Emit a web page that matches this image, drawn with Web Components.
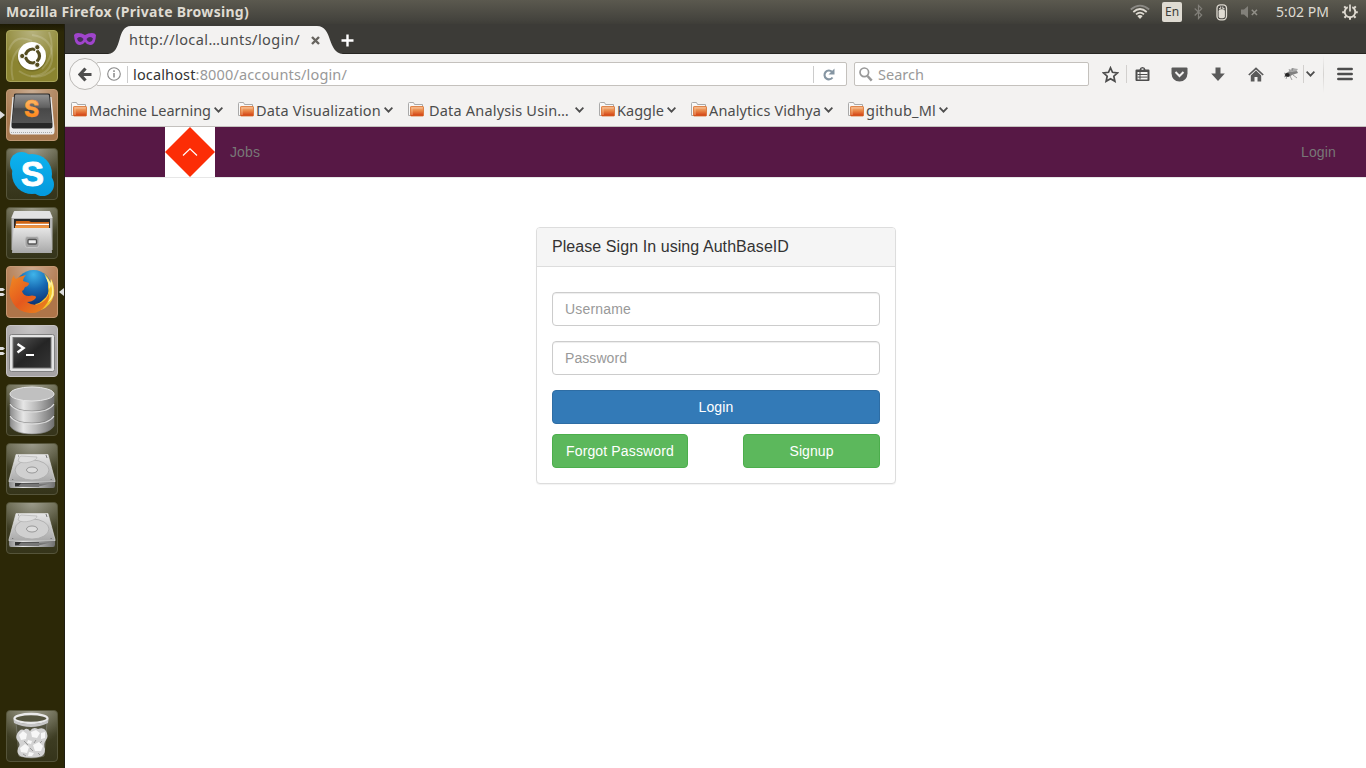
<!DOCTYPE html>
<html lang="en">
<head>
<meta charset="utf-8">
<title>Mozilla Firefox (Private Browsing)</title>
<style>
html,body{margin:0;height:100%;overflow:hidden;background:#fff}
</style>
</head>
<body>
<desktop-shell></desktop-shell>
<script>
const define = (name, html, init) => {
  const tpl = document.createElement('template');
  tpl.innerHTML = html;
  customElements.define(name, class extends HTMLElement {
    connectedCallback() {
      if (this.shadowRoot) return;
      this.attachShadow({mode: 'open'}).append(tpl.content.cloneNode(true));
      if (init) init.call(this, this.shadowRoot);
    }
  });
};

/* Glass tile behind most launcher entries */
const tile = (fill = 'url(#dk)', edge = '#55543a') => `
<defs>
<linearGradient id="dk" x1="0" y1="0" x2="0" y2="1"><stop offset="0" stop-color="#605f45"/><stop offset=".45" stop-color="#3f3e24"/><stop offset="1" stop-color="#35341a"/></linearGradient>
<radialGradient id="gl" cx=".5" cy="0" r=".7"><stop offset="0" stop-color="#fff" stop-opacity=".38"/><stop offset="1" stop-color="#fff" stop-opacity="0"/></radialGradient>
<linearGradient id="si" x1="0" y1="0" x2="1" y2="0"><stop offset="0" stop-color="#8b8b8b"/><stop offset=".3" stop-color="#e6e6e6"/><stop offset=".6" stop-color="#b9b9b9"/><stop offset="1" stop-color="#707070"/></linearGradient>
<linearGradient id="sv" x1="0" y1="0" x2="0" y2="1"><stop offset="0" stop-color="#e6e6e6"/><stop offset="1" stop-color="#a8a8a8"/></linearGradient>
</defs>
<rect x=".5" y=".5" width="51" height="51" rx="3.5" fill="${fill}" stroke="${edge}"/>
<rect x="1" y="1" width="50" height="50" rx="3" fill="url(#gl)"/>`;

const disk = tile() + `
<path d="M10 11.500H42L49 37.500V39H3V37.500Z" fill="url(#sv)" stroke="#e6e6e6" stroke-width=".6"/>
<path d="M3 39H49V42.500Q49 45 47 45H5Q3 45 3 42.500Z" fill="url(#si)"/>
<path d="M9 40H33V43.500H9Z" fill="#333"/><path d="M15 40.500H44L33 43.500H12Z" fill="#777"/>
<ellipse cx="26" cy="27" rx="17" ry="10" fill="#d0d0d0" stroke="#a9a9a9" stroke-width=".8"/>
<path d="M12 18Q13 13 15 13L31 14Q31 17 24 19Q16 21 12 18Z" fill="#dedede" stroke="#b4b4b4" stroke-width=".7"/>
<ellipse cx="26" cy="27" rx="5.500" ry="3" fill="#ddd" stroke="#888" stroke-width=".8"/>
<path d="M40 12 41 15M6 36.500h1.300M44.500 36.500h1.300M12 13h1" stroke="#777"/>`;

const ICONS = {
dash: [52, 52, tile('#8b8430', '#a9a55b') + `
<g fill="none" stroke="#fff" stroke-opacity=".16" stroke-width="2"><path d="M26 5Q48 8 46 30Q43 46 25 46"/><path d="M3 20Q9 3 26 11M43 2Q51 24 36 39M49 38Q32 54 13 41M7 50Q2 28 14 18"/></g>
<circle cx="26" cy="27" r="14.500" fill="#5d571d" opacity=".5"/><circle cx="26" cy="26" r="14" fill="#fff"/>
<circle cx="26.500" cy="26" r="7" fill="none" stroke="#554d20" stroke-width="3.200"/>
<g stroke="#fff" stroke-width="1.300"><path d="M26.500 26 15 26M26.500 26 32.500 16M26.500 26 32.500 36"/></g><circle cx="26.500" cy="26" r="4.500" fill="#fff"/>
<g fill="#554d20" stroke="#fff" stroke-width=".9"><circle cx="16.200" cy="26" r="2.600"/><circle cx="31.300" cy="17.200" r="2.600"/><circle cx="31.300" cy="34.800" r="2.600"/></g>`],
sublime: [52, 52, tile('#a8794e', '#bf9873') + `
<defs><linearGradient id="sb" x1="0" y1="0" x2="0" y2="1"><stop offset="0" stop-color="#929292"/><stop offset=".45" stop-color="#606060"/><stop offset=".5" stop-color="#484848"/><stop offset="1" stop-color="#555"/></linearGradient><linearGradient id="or" x1="0" y1="0" x2="0" y2="1"><stop offset="0" stop-color="#ffc277"/><stop offset="1" stop-color="#ff7800"/></linearGradient></defs>
<path d="M6.500 8H45.500L48.500 40Q49 45.500 46 45.500H6Q3 45.500 3.500 40Z" fill="#e9e9e9"/><path d="M5 43.500H47" stroke="#aaa" stroke-dasharray="1 1"/>
<path d="M8 5.500Q8 4.500 10 4.500H42Q44 4.500 44 5.500L46.500 35V37.500Q46.500 39.500 44.500 39.500H7.500Q5.500 39.500 5.500 37.500V35Z" fill="#282828"/>
<path d="M9 6.500Q9 5.500 10.500 5.500H41.500Q43 5.500 43 6.500L46 34H6Z" fill="url(#sb)"/>
<text x="25.500" y="28" text-anchor="middle" font-family="Inter, sans-serif" font-weight="800" font-size="23" fill="url(#or)" stroke="#ff962f" stroke-width=".3">S</text>`],
skype: [52, 52, tile() + `
<defs><linearGradient id="sk" gradientUnits="userSpaceOnUse" x1="0" y1="4" x2="0" y2="48"><stop offset="0" stop-color="#0db3ee"/><stop offset="1" stop-color="#0499dd"/></linearGradient></defs>
<g fill="url(#sk)"><circle cx="26" cy="26" r="20"/><circle cx="15.500" cy="15.500" r="11.500"/><circle cx="36.500" cy="36.500" r="11.500"/></g>
<text x="26.500" y="38" text-anchor="middle" font-family="Liberation Sans, sans-serif" font-weight="700" font-size="35" fill="#fff" stroke="#fff" stroke-width=".8">S</text>`],
files: [52, 52, tile() + `
<path d="M8 4.500Q8 4 9 4H43Q44 4 44 4.500L46.500 10V43H5.500V10Z" fill="#b5b5b5"/>
<path d="M5.500 11 8 4.500Q8 4 9 4H43Q44 4 44 4.500L46.500 11Z" fill="#e2e2e2"/><path d="M8 12H44V22H8Z" fill="#292929"/>
<path d="M10 14H23L25 15H43V21H9Z" fill="#cf6413"/><path d="M10 17.500H43" stroke="#fff" stroke-width="1.400"/><path d="M9 19H43V22H9Z" fill="#ef933d"/>
<path d="M7.500 21H44.500L46 46H6Z" fill="url(#sv)"/>
<rect x="19" y="29.500" width="14" height="11" rx="2.500" fill="#a2a2a2" stroke="#c8c8c8"/><rect x="22" y="32.500" width="8.500" height="4.500" rx="1" fill="#eee" stroke="#555" stroke-width="1.300"/>`],
firefox: [52, 52, tile('#ae7549', '#c59873') + `
<defs><radialGradient id="fb" cx=".5" cy=".12" r=".8"><stop offset="0" stop-color="#3fb4ea"/><stop offset=".5" stop-color="#1769b2"/><stop offset="1" stop-color="#0c3477"/></radialGradient>
<linearGradient id="fo" x1="0" y1="0" x2="1" y2="1"><stop offset="0" stop-color="#f08a22"/><stop offset=".5" stop-color="#e5581d"/><stop offset="1" stop-color="#e98b1d"/></linearGradient></defs>
<circle cx="27.500" cy="22.500" r="18.500" fill="url(#fb)"/>
<path d="M38 8Q43 14 42 21Q44 29 37 34Q33 38 29 38L35 44Q45 40 48 29Q49 19 45 13L44.500 17Q42 10 38 8Z" fill="#f5c52c"/>
<path d="M39 10Q43 17 43 23Q45 21 45 18Q48 28 42 36Q46 34 47.500 29Q48 20 45 13L44.500 17Q42 12 39 10Z" fill="#fff09a"/>
<path d="M5 18Q5 13 8 9Q8 12 10 13Q14 10 20 9Q17 12 17 15L23 17Q23 20 19 21Q18 24 16 25Q17 30 23 30Q26 29 29 30Q31 31 29 33Q26 36 21 36Q28 41 35 37Q41 34 43 27Q44 34 39 40Q33 48 24 47Q12 46 7 37Q1 28 5 18Z" fill="url(#fo)"/>`],
terminal: [52, 52, tile('#a6a3a4', '#c5c2c3') + `
<rect x="3.500" y="9.500" width="45" height="37" rx="2" fill="#e4e4e4" stroke="#818181"/><defs><linearGradient id="tm" x1="0" y1="0" x2="1" y2="1"><stop offset="0" stop-color="#555"/><stop offset=".5" stop-color="#252525"/><stop offset="1" stop-color="#353535"/></linearGradient></defs>
<rect x="7" y="12.500" width="38" height="30.500" fill="url(#tm)" stroke="#777"/><path d="M11.500 19 17.500 23 11.500 27.500" fill="none" stroke="#fff" stroke-width="2.500"/><path d="M20 30H28" stroke="#fff" stroke-width="2"/>`],
database: [52, 52, tile() + `
<g stroke="#777" stroke-width=".6"><path d="M4 33V42Q9 50 26 50Q43 50 48 42V33Z" fill="url(#si)"/><path d="M4 21V31Q9 39 26 39Q43 39 48 31V21Z" fill="url(#si)"/><path d="M4 10V19Q9 27 26 27Q43 27 48 19V10Z" fill="url(#si)"/></g>
<path d="M4 20Q9 28 26 28Q43 28 48 20M4 32Q9 40 26 40Q43 40 48 32" fill="none" stroke="#ddd" stroke-width="1.200"/><ellipse cx="26" cy="10" rx="22" ry="7" fill="#c0c0c0" stroke="#e6e6e6" stroke-width="1"/>`],
disk: [52, 52, disk],
trash: [52, 52, tile() + `
<path d="M10 12H41L38 46Q26 50 13 46Z" fill="#4d4e3c" fill-opacity=".75" stroke="#85857a" stroke-width=".6"/>
<path d="M11 24Q14 18 18 20Q21 17 24 21Q27 16 32 19Q38 17 40 21Q43 26 40 30Q37 34 39 39Q39 45 35 46.500Q25 49 15 46.500Q10 44 12 38Q15 35 12 31Q9 28 11 24Z" fill="#d2d2d2"/>
<g fill="#f7f7f7"><path d="M13 25 17 21 21 24 20 29 15 30ZM25 22 30 20 34 23 31 28 26 27ZM35 23 39 22 39 28 35 29ZM14 38 19 34 23 37 21 43 15 42ZM27 35 33 32 37 36 35 41 29 41ZM22 30 26 31 25 34 21 33ZM23 42 28 43 26 46 22 46Z"/></g>
<path d="M18 31 22 35M30 30 28 33M36 31 34 33M24 38 27 41M17 44 20 46M32 43 34 45" stroke="#999" fill="none"/>
<ellipse cx="25" cy="8.500" rx="16.500" ry="4.500" fill="#55553f" stroke="#e9e9e9" stroke-width="2.300"/><path d="M7.500 9.500Q14 14 25 14T42.500 9.500L42 13Q34 17 25 17T8 13Z" fill="#c5c5c5"/>`],
mask: [24, 16, `<path d="M1 4Q2 2 5 2Q9 2 12 4Q15 2 19 2Q22 2 23 4L22.500 8Q21.500 14 17 14Q14 14 12 11Q10 14 7 14Q2.500 14 1.500 8Z" fill="#a044cc"/><path d="M4 7.500Q7.500 4.500 10.500 8Q9.500 11 7 11Q4.500 10.500 4 7.500ZM20 7.500Q16.500 4.500 13.500 8Q14.500 11 17 11Q19.500 10.500 20 7.500Z" fill="#46305a"/>`],
wifi: [20, 16, `<g fill="none" stroke-width="1.700"><path d="M.8 5.500Q10-2.300 19.200 5.500" stroke="#8b8984"/><path d="M3.300 8Q10 2 16.700 8M6 10.300Q10 6.800 14 10.300" stroke="#dfdbd2"/></g><path d="M7.300 12Q10 10 12.700 12L10 15Z" fill="#dfdbd2"/>`],
bluetooth: [9, 16, `<path d="M.7 4.500 7.700 11 4.500 14.500V1.500L7.700 4.700 .7 11.500" fill="none" stroke="#817f79" stroke-width="1.200"/>`],
battery: [12, 17, `<rect x="1" y=".8" width="9.500" height="15" rx="3.500" fill="#4a4944" stroke="#dfdbd2" stroke-width="1.300"/><rect x="2.600" y="5.200" width="6.300" height="9" rx="2" fill="#dfdbd2"/><path d="M3 4.600H4.700V2.500M8.500 4.600H6.800V2.500" stroke="#dfdbd2" fill="none"/>`],
mute: [18, 14, `<path d="M0 4.500H3L7 1V13L3 9.500H0Z" fill="#82807a"/><path d="M10.800 4.700 16 10M16 4.700 10.800 10" stroke="#918f88" stroke-width="1.500"/>`],
power: [16, 16, `<g stroke="#dfdbd2" fill="none"><path d="M5.700 3.200A5.300 5.300 0 1 0 10.300 3.200" stroke-width="1.900"/><path d="M8 .5V7.500" stroke-width="1.700"/><path d="M3.800 4 2.200 2.400M12.200 4 13.800 2.400M2.500 8.200H.2M13.500 8.200H15.800M4 12.200 2.400 13.800M12 12.200 13.600 13.800M8 13.500V15.800" stroke-width="2"/></g>`],
close: [9, 9, `<path d="M1 1 8 8M8 1 1 8" stroke="#66645f" stroke-width="2.400"/>`],
plus: [13, 13, `<path d="M6.500 .5V12.500M.5 6.500H12.500" stroke="#fff" stroke-width="2.400"/>`],
back: [14, 15, `<path d="M7.500 1.500 2 7.500 7.500 13.500M2.500 7.500H13.500" fill="none" stroke="#4d4d4d" stroke-width="3.200"/>`],
info: [14, 14, `<circle cx="7" cy="7" r="6.300" fill="none" stroke="#888" stroke-width="1.100"/><path d="M7 6V10.500M7 3.300V4.900" stroke="#888" stroke-width="1.500"/>`],
reload: [12, 13, `<path d="M9 3.800A4.400 4.400 0 1 0 9.500 9.500" fill="none" stroke="#8595a2" stroke-width="2.100"/><path d="M11.500.5V6.500H5.500Z" fill="#8595a2"/>`],
search: [14, 15, `<circle cx="5.300" cy="5.300" r="4.300" fill="none" stroke="#999" stroke-width="1.700"/><path d="M8.500 9 12.700 13.700" stroke="#999" stroke-width="2.500"/>`],
star: [17, 17, `<path d="M8.500 1.800 10.500 6.300 15.500 6.900 11.800 10.200 12.900 15.300 8.500 12.700 4.100 15.300 5.200 10.200 1.500 6.900 6.500 6.300Z" fill="none" stroke="#4d4d4d" stroke-width="1.700"/>`],
clip: [15, 16, `<path d="M.5 4.500Q.5 3.500 1.500 3.500H4.500Q5 1 7.500 1T10.500 3.500H13.500Q14.500 3.500 14.500 4.500V14Q14.500 15 13.500 15H1.500Q.5 15 .5 14Z" fill="#4d4d4d"/><path d="M2.500 6H12.500V13.500H2.500Z" fill="#f3f2f1"/><path d="M2.500 8.500H12.500M2.500 11.100H12.500M5 6V13.500" stroke="#4d4d4d"/><rect x="6.500" y="2.500" width="2" height="1.300" fill="#f3f2f1"/>`],
pocket: [17, 15, `<path d="M1.500.5H15.500Q16.500.5 16.500 1.500V6.500Q16 14.300 8.500 14.500Q1 14.300.5 6.500V1.500Q.5.500 1.500.5Z" fill="#5a5a5a"/><path d="M4.500 5 8.500 9 12.500 5" fill="none" stroke="#f3f2f1" stroke-width="2"/>`],
down: [14, 15, `<path d="M4.500.5H9.500V6.500H13.800L7 14 .2 6.500H4.500Z" fill="#5a5a5a"/>`],
home: [16, 15, `<path d="M.8 8 8 1.300 15.200 8" fill="none" stroke="#5a5a5a" stroke-width="1.700"/><path d="M2.800 8.500 8 3.600 13.200 8.500V14.500H9.500V10H6.500V14.500H2.800Z" fill="#5a5a5a"/>`],
bug: [16, 14, `<path d="M5 5 9 1 15 2 12 6Z" fill="#aaa"/><path d="M2 7Q5 4 9 5L14 4 15 6 9 8Q6 11 2 9Z" fill="#808080"/><ellipse cx="4.200" cy="8" rx="2.500" ry="1.900" fill="#252525"/><path d="M7 4 6 2M9 4 10 1M7 9 9 13M4 9 3 12M10 8 14 11M1 6 3 7M1 10 3 9" stroke="#888" stroke-width=".8"/>`],
menu: [16, 14, `<path d="M1.300 2H14.700M1.300 7H14.700M1.300 12H14.700" stroke="#4d4d4d" stroke-width="2.500" stroke-linecap="round"/>`],
chevron: [9, 6, `<path d="M.6.7 4.500 4.700 8.400.7" fill="none" stroke="#4d4d4d" stroke-width="1.800"/>`],
folder: [16, 15, `<defs><linearGradient id="f" x1="0" y1="0" x2="0" y2="1"><stop offset="0" stop-color="#f4b888"/><stop offset=".45" stop-color="#e98747"/><stop offset="1" stop-color="#d13b0f"/></linearGradient></defs><path d="M.5 13.500V1.500Q.5.500 1.500.5H5.500L6.500 2.500H14.500V5" fill="#f8f8f8" stroke="#aaa"/><path d="M.5 13.500H3" fill="none" stroke="#aaa"/><rect x="2.500" y="4.500" width="13" height="9.500" rx=".6" fill="url(#f)" stroke="#d9702f" stroke-width=".8"/><path d="M4 13V6H14.500" fill="none" stroke="#f8c39b" stroke-width=".7"/>`],
logo: [50, 50, `<path d="M25 0 50 25 25 50 0 25Z" fill="#fc2d06"/><path d="M18 28.500 25 21.800 32 28.500" fill="none" stroke="#fff" stroke-width="1.200"/>`]
};

define('ui-icon', `<style>:host{display:block;flex:none}svg{display:block}</style>`, function (root) {
  const [w, h, body] = ICONS[this.getAttribute('name')];
  root.innerHTML += `<svg width="${w}" height="${h}" viewBox="0 0 ${w} ${h}">${body}</svg>`;
});

/* A single line of text spread to a set width through its letter spacing */
define('fit-text', `<style>:host{display:block;flex:none;white-space:nowrap}span{display:inline-block}</style><span><slot></slot></span>`, function (root) {
  const w = +this.getAttribute('w'), span = root.querySelector('span');
  this.style.width = w + 'px';
  const natural = span.getBoundingClientRect().width;
  span.style.letterSpacing = ((w - natural) / this.textContent.length) + 'px';
});

define('top-panel', `<style>
:host{box-sizing:border-box;display:flex;align-items:center;height:24px;padding:0 8px 0 6px;background:linear-gradient(#5b594f,#45443e 80%,#3e3d38);color:#dfdbd2;font:15px/24px "Noto Sans",sans-serif}
.title{font-weight:700;font-size:14px;margin-right:auto}
.kb{box-sizing:border-box;width:20px;height:20px;border-radius:2px;background:#dfdbd2;color:#3e3d39;font-size:12px;line-height:20px;padding-left:3px;margin:0 12px}
.time{font-size:14px;margin:0 13px 0 17px}
</style>
<fit-text class="title" w="243">Mozilla Firefox (Private Browsing)</fit-text>
<ui-icon name="wifi"></ui-icon><div class="kb"><fit-text w="14">En</fit-text></div><ui-icon name="bluetooth"></ui-icon>
<ui-icon name="battery" style="margin:0 13px 0 13px"></ui-icon><ui-icon name="mute"></ui-icon><fit-text class="time" w="53">5:02 PM</fit-text><ui-icon name="power"></ui-icon>`);

define('launcher-item', `<style>
:host{display:block;position:relative;width:52px;height:52px}
.mark{position:absolute;display:none;left:-6px;top:21px}
:host([windows="1"]) .one,:host([windows="2"]) .two,:host([active]) .on{display:block}
.on{left:52px}
</style>
<svg class="mark one" width="6" height="10"><path d="M0 1 5 5 0 9Z" fill="#ddd"/></svg>
<svg class="mark two" width="6" height="10"><path d="M0 1H3L5 2.500 3 4H0ZM0 6H3L5 7.500 3 9H0Z" fill="#ddd"/></svg>
<svg class="mark on" width="6" height="10"><path d="M6 1 1 5 6 9Z" fill="#ddd"/></svg>`, function (root) {
  const icon = document.createElement('ui-icon');
  icon.setAttribute('name', this.getAttribute('icon'));
  root.append(icon);
});

define('app-launcher', `<style>
:host{box-sizing:border-box;display:flex;flex-direction:column;gap:7px;padding:6px;width:65px;background:linear-gradient(#1d1a04,#2c2807 8px);border-right:1px solid #201e12}
.last{margin-top:auto}
</style>
<launcher-item icon="dash"></launcher-item><launcher-item icon="sublime" windows="1"></launcher-item><launcher-item icon="skype"></launcher-item><launcher-item icon="files"></launcher-item><launcher-item icon="firefox" windows="2" active></launcher-item><launcher-item icon="terminal" windows="2"></launcher-item><launcher-item icon="database"></launcher-item><launcher-item icon="disk"></launcher-item><launcher-item icon="disk"></launcher-item><launcher-item icon="trash" class="last"></launcher-item>`);

define('tab-strip', `<style>
:host{display:flex;height:30px;background:#3c3b37;font:14.500px/30px "Noto Sans",sans-serif;color:#4c4c4c;box-shadow:inset 0 -1px #272622}
.mask{margin:7px 0 0 8px}
.tab{position:relative;display:flex;align-items:center;width:236px;margin-left:11px;isolation:isolate}
.tab svg{position:absolute;left:0;top:0;z-index:-1}
.txt{margin:0 0 0 21px}.x{margin:2px 0 0 11px}.plus{margin:10px 0 0 -3px}
</style><ui-icon class="mask" name="mask"></ui-icon>
<div class="tab"><svg width="236" height="30"><path d="M0 30C15 29 8 2 23 2H209C225 2 219 29 235 30Z" fill="#f3f2f1"/></svg><fit-text class="txt" w="171">http://local…unts/login/</fit-text><ui-icon class="x" name="close"></ui-icon></div>
<ui-icon class="plus" name="plus"></ui-icon>`);

define('nav-toolbar', `<style>
:host{display:flex;align-items:center;height:40px;padding:0 13px 0 4px;font:14.500px/24px "Noto Sans",sans-serif;color:#999;box-sizing:border-box}
.back{box-sizing:border-box;width:32px;height:32px;border:1px solid #bbb9b6;border-radius:50%;background:#f8f7f6;display:flex;align-items:center;justify-content:center;z-index:1}
.field{box-sizing:border-box;height:24px;border:1px solid #c4c1bd;border-radius:2px;background:#fff;display:flex;align-items:center}
.url{width:751px;margin-left:-5px;padding:0 11px 0 10px}
.url i{width:1px;height:17px;background:#ccc;margin:0 5px 0 6px}
.url i.r{margin:0 9px 0 auto}
b{font-weight:400;color:#333}
.search{width:235px;margin-left:7px;padding-left:4px}
.search fit-text{margin-left:5px}
.sep{width:1px;height:18px;background:#d2d0ce}
.tall{width:1px;height:38px;background:linear-gradient(transparent,#d5d3d1,transparent)}
</style>
<div class="back"><ui-icon name="back"></ui-icon></div>
<div class="field url"><ui-icon name="info"></ui-icon><i></i><fit-text w="214"><b>localhost</b>:8000/accounts/login/</fit-text><i class="r"></i><ui-icon name="reload"></ui-icon></div>
<div class="field search"><ui-icon name="search"></ui-icon><fit-text w="46">Search</fit-text></div>
<ui-icon name="star" style="margin-left:13px"></ui-icon><div class="sep" style="margin:0 8px 0 7px"></div><ui-icon name="clip"></ui-icon>
<ui-icon name="pocket" style="margin-left:21px"></ui-icon><ui-icon name="down" style="margin-left:23px"></ui-icon><ui-icon name="home" style="margin-left:23px"></ui-icon>
<ui-icon name="bug" style="margin-left:19px"></ui-icon><div class="sep" style="margin:0 2px 0 4px"></div><ui-icon name="chevron"></ui-icon><div class="tall" style="margin:0 auto 0 8px"></div><ui-icon name="menu"></ui-icon>`);

define('bookmark-folder', `<style>:host{display:flex;align-items:center;gap:2px}.c{margin-left:1px}:host([wide]) ::slotted(*){margin:0 3px}</style><ui-icon name="folder"></ui-icon><slot></slot><ui-icon class="c" name="chevron"></ui-icon>`);

define('bookmarks-bar', `<style>:host{box-sizing:border-box;display:flex;align-items:center;gap:15px;height:33px;padding:0 0 1px 6px;border-bottom:1px solid #c4c1be;font:14.500px/24px "Noto Sans",sans-serif;color:#4c4c4c}</style>
<bookmark-folder><fit-text w="122">Machine Learning</fit-text></bookmark-folder><bookmark-folder><fit-text w="125">Data Visualization</fit-text></bookmark-folder><bookmark-folder wide><fit-text w="140">Data Analysis Usin…</fit-text></bookmark-folder><bookmark-folder><fit-text w="47">Kaggle</fit-text></bookmark-folder><bookmark-folder><fit-text w="112">Analytics Vidhya</fit-text></bookmark-folder><bookmark-folder><fit-text w="70">github_Ml</fit-text></bookmark-folder>`);

define('site-navbar', `<style>
:host{box-sizing:border-box;display:flex;height:51px;padding:0 30px 0 100px;background:#571845;border-bottom:1px solid #e7e7e7;font:14px/50px "Liberation Sans",sans-serif;color:#777}
.logo{background:#fff;margin-right:15px}.login{margin-left:auto}
</style><ui-icon class="logo" name="logo"></ui-icon><fit-text w="30">Jobs</fit-text><fit-text class="login" w="35">Login</fit-text>`);

define('form-field', `<style>:host{box-sizing:border-box;display:block;height:34px;padding:0 12px;border:1px solid #ccc;border-radius:4px;background:#fff;box-shadow:inset 0 1px 1px rgba(0,0,0,.075);color:#999;line-height:32px}</style><slot></slot>`);

define('push-button', `<style>:host{box-sizing:border-box;display:flex;justify-content:center;height:34px;border:1px solid #4cae4c;border-radius:4px;background:#5cb85c;color:#fff;line-height:32px}:host([primary]){background:#337ab7;border-color:#2e6da4}</style><slot></slot>`);

define('login-panel', `<style>
:host{box-sizing:border-box;display:block;width:360px;height:257px;border:1px solid #ddd;border-radius:4px;background:#fff;box-shadow:0 1px 1px rgba(0,0,0,.05);font:14px "Liberation Sans",sans-serif}
header{height:38px;box-sizing:content-box;padding-left:15px;background:#f5f5f5;border-bottom:1px solid #ddd;border-radius:3px 3px 0 0;font-size:16px;line-height:37px;color:#333}
main{display:flex;flex-direction:column;gap:15px;padding:25px 15px 0}
.row{display:flex;justify-content:space-between;margin-top:-5px}
</style><header><fit-text w="237">Please Sign In using AuthBaseID</fit-text></header>
<main><form-field><fit-text w="66">Username</fit-text></form-field><form-field><fit-text w="62">Password</fit-text></form-field><push-button primary><fit-text w="35">Login</fit-text></push-button>
<div class="row"><push-button style="width:136px"><fit-text w="108">Forgot Password</fit-text></push-button><push-button style="width:137px"><fit-text w="44">Signup</fit-text></push-button></div></main>`);

define('browser-window', `<style>:host{display:flex;flex-direction:column;min-width:0;background:#fff}.chrome{background:#f3f2f1}login-panel{margin:49px 0 0 471px}</style>
<div class="chrome"><tab-strip></tab-strip><nav-toolbar></nav-toolbar><bookmarks-bar></bookmarks-bar></div><site-navbar></site-navbar><login-panel></login-panel>`);

define('desktop-shell', `<style>:host{display:grid;grid-template:24px 744px / 65px 1301px;width:1366px;height:768px;overflow:hidden}top-panel{grid-column:1/3}</style>
<top-panel></top-panel><app-launcher></app-launcher><browser-window></browser-window>`);
</script>
</body>
</html>
